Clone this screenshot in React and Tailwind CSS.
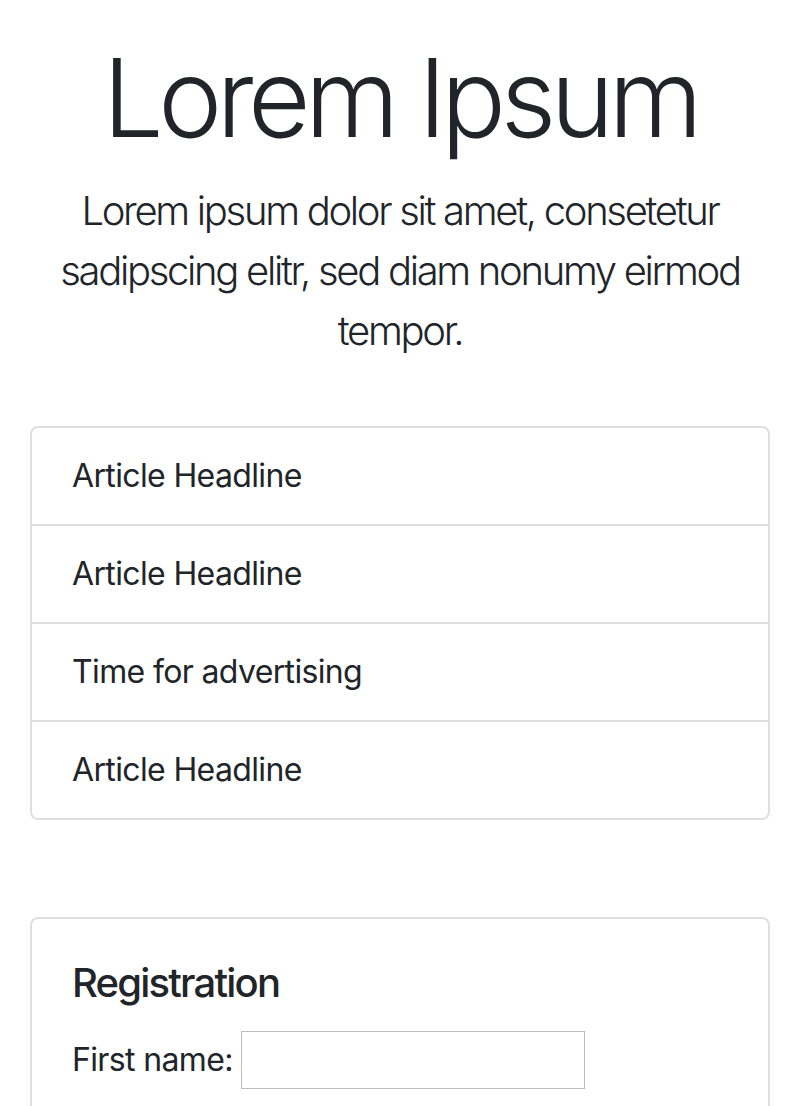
import React from "react";

const items = [
  "Article Headline",
  "Article Headline",
  "Time for advertising",
  "Article Headline",
];

export default function App() {
  return (
    <div className="min-h-screen bg-white text-[#212529] font-['Inter','Noto_Sans',sans-serif]">
      <div className="px-[30px]">
        {/* Jumbotron header */}
        <div className="pt-[33px] text-center">
          <h1 className="text-[108px] leading-[130px] font-light tracking-[-0.052em]">
            Lorem Ipsum
          </h1>
          <p className="mt-[18px] text-[40px] leading-[60px] font-light tracking-[-0.058em]">
            Lorem ipsum dolor sit amet, consetetur sadipscing elitr, sed diam
            nonumy eirmod tempor.
          </p>
        </div>

        {/* Articles */}
        <ul className="mt-[65px] border-2 border-[#dfdfdf] rounded-[8px]">
          {items.map((item, i) => (
            <li
              key={i}
              className={`px-[40px] py-[24px] text-[32px] leading-[48px] tracking-[-0.02em] ${
                i > 0 ? "border-t-2 border-[#dfdfdf]" : ""
              }`}
            >
              {item}
            </li>
          ))}
        </ul>

        {/* Registration */}
        <div className="mt-[97px] border-2 border-[#dfdfdf] rounded-[8px] p-[40px]">
          <h5 className="text-[40px] leading-[48px] font-medium tracking-[-0.045em] mb-[24px]">
            Registration
          </h5>
          <div className="flex items-center gap-[8px] text-[32px] leading-[48px] tracking-[-0.02em]">
            <label htmlFor="first">First name:</label>
            <input
              id="first"
              type="text"
              className="w-[344px] h-[58px] border border-[#bdbdbd] outline-none"
            />
          </div>
          <div className="h-[200px]" />
        </div>
      </div>
    </div>
  );
}
